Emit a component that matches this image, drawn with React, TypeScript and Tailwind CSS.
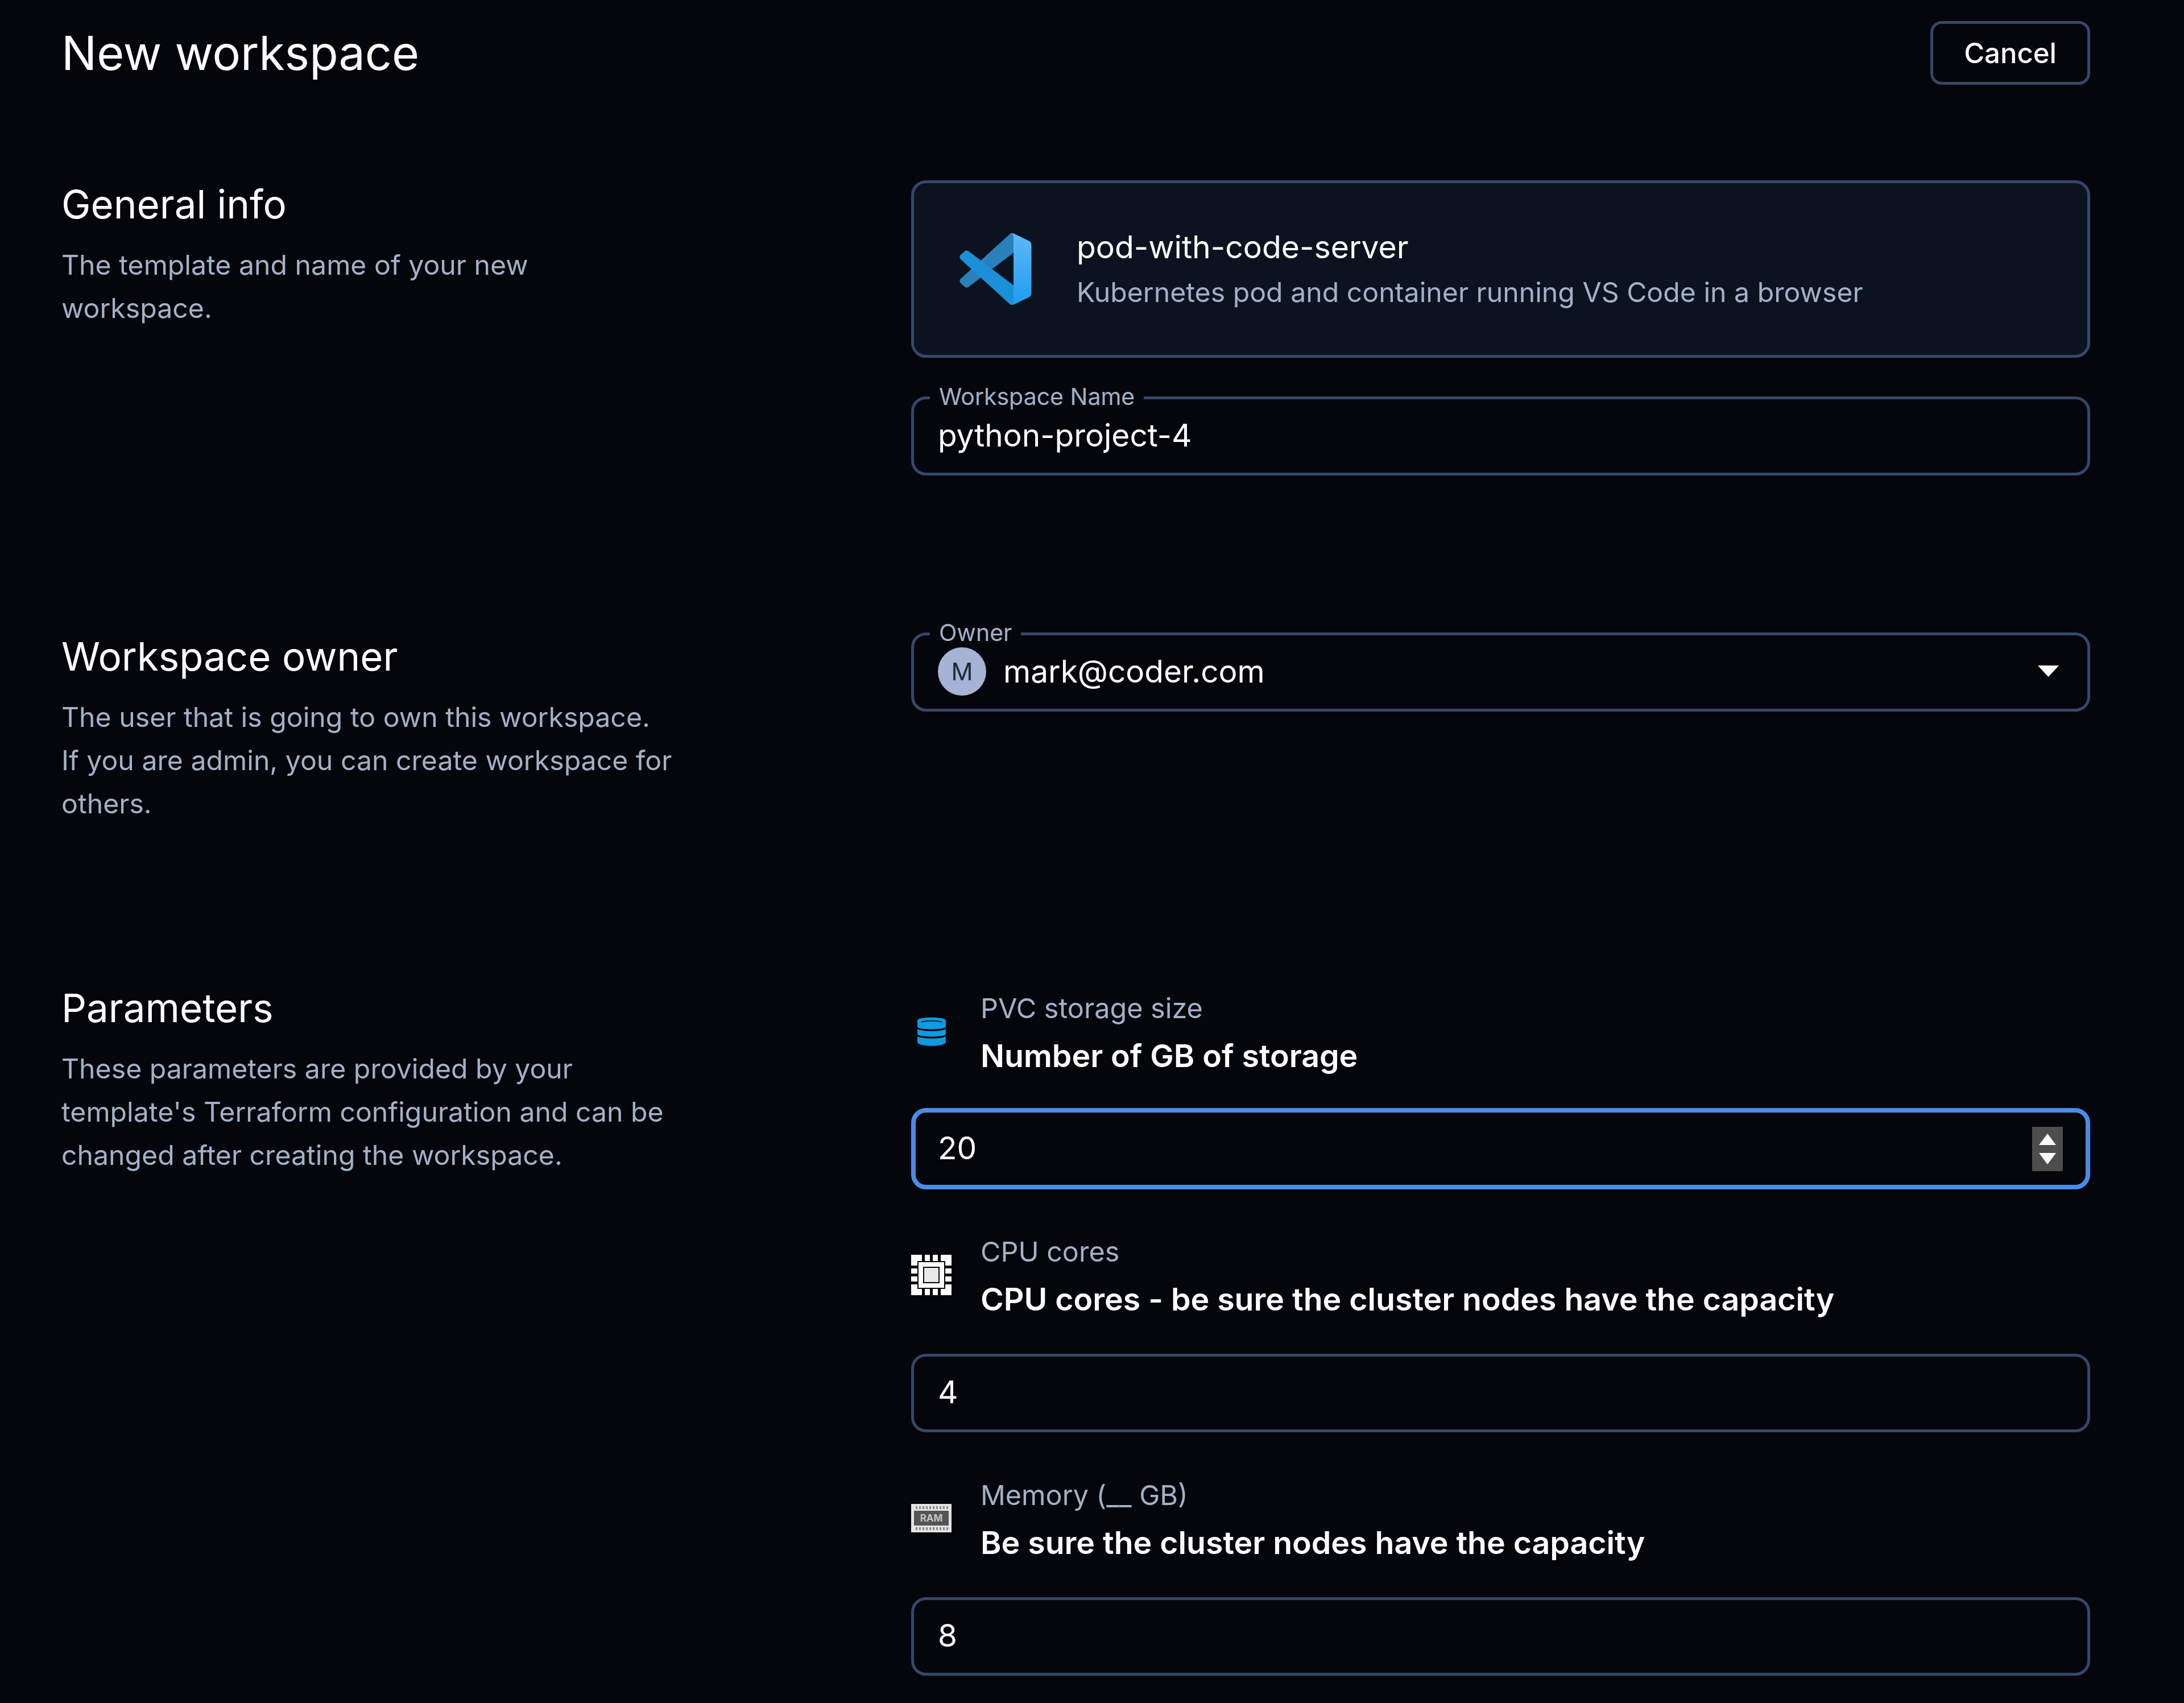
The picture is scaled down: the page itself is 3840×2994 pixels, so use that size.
import React from 'react';

function VsCodeIcon() {
  return (
    <svg viewBox="0 0 100 100" className="h-[126px] w-[127px] shrink-0">
      <defs>
        <linearGradient id="vsTop" x1="0" y1="0" x2="0" y2="1">
          <stop offset="0" stopColor="#5cb8f8" />
          <stop offset="1" stopColor="#1f9cf0" />
        </linearGradient>
      </defs>
      <path
        fill="#2a80b8"
        d="M96.4614 10.7962L75.8569 0.875542C73.4719 -0.272773 70.6217 0.211611 68.75 2.08333L1.29858 63.5832C-0.515693 65.2373 -0.513607 68.0937 1.30308 69.7452L6.81272 74.754C8.29793 76.1042 10.5347 76.2036 12.1338 74.9905L93.3609 13.3699C96.086 11.3026 100 13.2462 100 16.6667V16.4275C100 14.0265 98.6246 11.8378 96.4614 10.7962Z"
      />
      <path
        fill="#1b90d8"
        d="M96.4614 89.2038L75.8569 99.1245C73.4719 100.273 70.6217 99.7884 68.75 97.9167L1.29858 36.4169C-0.515693 34.7627 -0.513607 31.9063 1.30308 30.2548L6.81272 25.246C8.29793 23.8958 10.5347 23.7964 12.1338 25.0095L93.3609 86.6301C96.086 88.6974 100 86.7538 100 83.3334V83.5726C100 85.9735 98.6246 88.1622 96.4614 89.2038Z"
      />
      <path
        fill="url(#vsTop)"
        d="M75.8578 99.1263C73.4721 100.274 70.6219 99.7885 68.75 97.9166C71.0564 100.223 75 98.5895 75 95.3278V4.67213C75 1.41039 71.0564 -0.223106 68.75 2.08329C70.6219 0.211402 73.4721 -0.273666 75.8578 0.873633L96.4587 10.7807C98.6234 11.8217 100 14.0112 100 16.4132V83.5871C100 85.9891 98.6234 88.1786 96.4586 89.2196L75.8578 99.1263Z"
      />
    </svg>
  );
}

function DatabaseIcon() {
  return (
    <svg viewBox="0 0 50 51" className="h-[51px] w-[50px]">
      <path fill="#0c9ae0" d="M0 6C0 -1 50 -1 50 6V17C50 23 0 23 0 17Z" />
      <path fill="none" stroke="#05060b" strokeWidth="1.5" d="M7 9C14 6 36 6 43 9" />
      <path fill="#0c9ae0" d="M0 21C8 26 42 26 50 21V30C50 36 0 36 0 30Z" />
      <path fill="#0c9ae0" d="M0 34C8 39 42 39 50 34V44C50 53 0 53 0 44Z" />
    </svg>
  );
}

function CpuIcon() {
  return (
    <svg viewBox="0 0 71 71" className="h-[71px] w-[71px]">
      <g fill="#ffffff">
        <path d="M0 0H19V11H11V19H0Z" />
        <path d="M71 0H52V11H60V19H71Z" />
        <path d="M0 71H19V60H11V52H0Z" />
        <path d="M71 71H52V60H60V52H71Z" />
        <rect x="24" y="0" width="9" height="11" />
        <rect x="38" y="0" width="9" height="11" />
        <rect x="24" y="60" width="9" height="11" />
        <rect x="38" y="60" width="9" height="11" />
        <rect x="0" y="24" width="11" height="9" />
        <rect x="0" y="38" width="11" height="9" />
        <rect x="60" y="24" width="11" height="9" />
        <rect x="60" y="38" width="11" height="9" />
        <rect x="13" y="13" width="45" height="45" />
      </g>
      <rect x="21" y="21" width="29" height="29" fill="#05060b" />
      <rect x="23" y="23" width="25" height="25" fill="#e8e8e8" />
    </svg>
  );
}

function RamIcon() {
  const pins = [8, 14, 20, 26, 32, 38, 44, 50, 56, 62];
  return (
    <svg viewBox="0 0 71 50" className="h-[50px] w-[71px]">
      <rect width="71" height="50" fill="#e4e4e4" />
      {pins.map((x) => (
        <React.Fragment key={x}>
          <rect x={x} y="4" width="3" height="5" fill="#8a8a8a" />
          <rect x={x} y="41" width="3" height="5" fill="#8a8a8a" />
        </React.Fragment>
      ))}
      <rect x="5" y="12" width="61" height="26" fill="#555555" />
      <text
        x="35.5"
        y="31"
        textAnchor="middle"
        fontSize="17"
        fontWeight="700"
        fontFamily="Inter, sans-serif"
        fill="#c4c4c4"
      >
        RAM
      </text>
    </svg>
  );
}

function SectionInfo({ title, children }: { title: string; children: React.ReactNode }) {
  return (
    <div>
      <h2 className="text-[69px] leading-[84px] text-white">{title}</h2>
      <p className="mt-[27px] w-[1092px] text-[48.2px] leading-[76px] text-[#a3b1c9]">{children}</p>
    </div>
  );
}

function Field({ label, children }: { label: string; children: React.ReactNode }) {
  return (
    <div className="relative flex h-[139px] items-center rounded-[26px] border-[5px] border-[#36476b] pr-[44px] pb-[3px] pl-[42px] text-[55px] text-white">
      <span className="absolute top-[-28px] left-[28px] bg-[#05060b] px-[16px] text-[41px] leading-[46px] text-[#a3b1c9]">
        {label}
      </span>
      {children}
    </div>
  );
}

type ParamProps = {
  icon: React.ReactNode;
  label: string;
  description: string;
  value: string;
  focused?: boolean;
};

function Param({ icon, label, description, value, focused }: ParamProps) {
  return (
    <div>
      <div className="flex items-center gap-[51px]">
        <div className="-mt-[10px] flex w-[71px] justify-center">{icon}</div>
        <div>
          <div className="text-[48.5px] leading-[70px] text-[#a3b1c9]">{label}</div>
          <div className="mt-[6px] text-[55.4px] leading-[84px] font-semibold text-white">{description}</div>
        </div>
      </div>
      <div
        className={
          focused
            ? 'mt-[50px] -mb-[1px] flex h-[143px] items-center justify-between rounded-[26px] border-[8px] border-[#4a8be8] pr-[40px] pl-[39px] text-[55px] text-white'
            : 'mt-[54px] flex h-[138px] items-center justify-between rounded-[26px] border-[5px] border-[#36476b] pr-[43px] pl-[42px] text-[55px] text-white'
        }
      >
        <span className="pb-[3px]">{value}</span>
        {focused && (
          <div className="flex h-[78px] w-[54px] flex-col items-center justify-center gap-[14px] bg-[#4d4d4d]">
            <svg viewBox="0 0 30 20" className="h-[20px] w-[30px]">
              <path d="M15 0L30 20H0Z" fill="#ffffff" />
            </svg>
            <svg viewBox="0 0 30 20" className="h-[20px] w-[30px]">
              <path d="M0 0H30L15 20Z" fill="#ffffff" />
            </svg>
          </div>
        )}
      </div>
    </div>
  );
}

export default function App() {
  return (
    <div className="h-[2994px] overflow-hidden bg-[#05060b] pt-[37px] pr-[165px] pl-[108px] font-['Inter',sans-serif]">
      {/* Header */}
      <div className="flex items-center justify-between">
        <h1 className="text-[82.5px] leading-[112px] text-white">New workspace</h1>
        <button className="h-[112px] w-[281px] rounded-[20px] border-[5px] border-[#36476b] pt-[2px] text-[49px] font-medium text-white">
          Cancel
        </button>
      </div>

      {/* General info */}
      <section className="mt-[168px] grid grid-cols-[1494px_1fr]">
        <SectionInfo title="General info">
          The template and name of your new workspace.
        </SectionInfo>
        <div>
          <div className="flex h-[312px] items-center gap-[79px] rounded-[26px] border-[5px] border-[#36476b] bg-[#0c1320] pl-[80px]">
            <VsCodeIcon />
            <div>
              <div className="-mt-[3px] text-[55.3px] leading-[84px] text-white">pod-with-code-server</div>
              <div className="text-[48.2px] leading-[76px] text-[#a3b1c9]">
                Kubernetes pod and container running VS Code in a browser
              </div>
            </div>
          </div>
          <div className="mt-[68px]">
            <Field label="Workspace Name">python-project-4</Field>
          </div>
        </div>
      </section>

      {/* Workspace owner */}
      <section className="mt-[276px] grid grid-cols-[1494px_1fr]">
        <SectionInfo title="Workspace owner">
          The user that is going to own this workspace.
          <br />
          If you are admin, you can create workspace for others.
        </SectionInfo>
        <div>
          <Field label="Owner">
            <div className="flex h-[85px] w-[85px] items-center justify-center rounded-full bg-[#a5b4d4] text-[42px] text-[#1e293b]">
              M
            </div>
            <span className="ml-[30px] flex-1">mark@coder.com</span>
            <svg viewBox="0 0 37 20" className="mr-[6px] h-[20px] w-[37px]">
              <path d="M0 0H37L18.5 20Z" fill="#ffffff" />
            </svg>
          </Field>
        </div>
      </section>

      {/* Parameters */}
      <section className="mt-[279px] grid grid-cols-[1494px_1fr]">
        <SectionInfo title="Parameters">
          These parameters are provided by your template's Terraform configuration and can be changed after creating
          the workspace.
        </SectionInfo>
        <div className="flex flex-col gap-[76px] pt-[8px]">
          <Param
            icon={<DatabaseIcon />}
            label="PVC storage size"
            description="Number of GB of storage"
            value="20"
            focused
          />
          <Param
            icon={<CpuIcon />}
            label="CPU cores"
            description="CPU cores - be sure the cluster nodes have the capacity"
            value="4"
          />
          <Param
            icon={<RamIcon />}
            label="Memory (__ GB)"
            description="Be sure the cluster nodes have the capacity"
            value="8"
          />
        </div>
      </section>
    </div>
  );
}
